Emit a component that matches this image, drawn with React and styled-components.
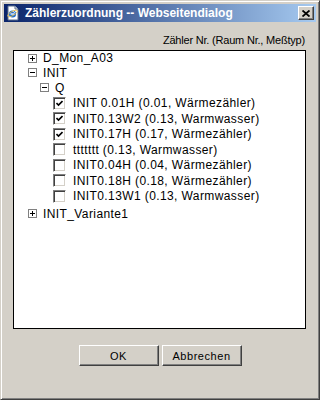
import React from 'react'
import styled, { createGlobalStyle } from 'styled-components'

const GlobalStyle = createGlobalStyle`
    html, body {
        margin: 0;
        padding: 0;
        background: #d4d0c8;
    }
    body {
        font-family: "Liberation Sans", Arial, sans-serif;
    }
`;

const Window = styled.div`
    width: 320px;
    height: 400px;
    box-sizing: border-box;
    display: flex;
    flex-direction: column;
    background: #d4d0c8;
    border-left: 1px solid #d4d0c8;
    border-top: 1px solid #d4d0c8;
    border-right: 1px solid #404040;
    border-bottom: 1px solid #404040;
    box-shadow: inset 1px 1px 0 #ffffff, inset -1px -1px 0 #808080;
    padding: 3px;
`;

const TitleBar = styled.div`
    height: 18px;
    display: flex;
    align-items: center;
    padding: 0 2px 0 1px;
    background: linear-gradient(to right, #0a246a, #a6caf0);
`;

const Title = styled.span`
    flex: 1;
    margin-left: 4px;
    color: #fff;
    font-weight: bold;
    font-size: 12px;
    line-height: 18px;
    white-space: nowrap;
`;

const CloseButton = styled.div`
    width: 16px;
    height: 14px;
    box-sizing: border-box;
    display: flex;
    align-items: center;
    justify-content: center;
    background: #d4d0c8;
    border-top: 1px solid #fff;
    border-left: 1px solid #fff;
    border-right: 1px solid #404040;
    border-bottom: 1px solid #404040;
    box-shadow: inset -1px -1px 0 #808080;
`;

const Body = styled.div`
    flex: 1;
    display: flex;
    flex-direction: column;
    padding: 11px 10px 0 9px;
`;

const Caption = styled.div`
    height: 14px;
    line-height: 14px;
    text-align: right;
    padding-right: 1px;
    font-size: 11px;
    letter-spacing: -0.2px;
    color: #000;
`;

const TreeBox = styled.div`
    margin-top: 3px;
    height: 279px;
    box-sizing: border-box;
    border: 1px solid #000;
    background: #fff;
    padding-top: 0;
`;

const Row = styled.div`
    height: ${p => p.h}px;
    display: flex;
    align-items: center;
    padding-left: ${p => p.indent}px;
    font-size: 12px;
    letter-spacing: 0.4px;
    color: #000;
    white-space: nowrap;
`;

const Expander = styled.span`
    width: 9px;
    height: 9px;
    box-sizing: border-box;
    border: 1px solid #808080;
    background: #fff;
    display: flex;
    align-items: center;
    justify-content: center;
    margin-right: 6px;
`;

const Check = styled.span`
    width: 13px;
    height: 13px;
    box-sizing: border-box;
    border-top: 1px solid #808080;
    border-left: 1px solid #808080;
    border-right: 1px solid #fff;
    border-bottom: 1px solid #fff;
    box-shadow: inset 1px 1px 0 #404040, inset -1px -1px 0 #d4d0c8;
    background: #fff;
    display: flex;
    align-items: center;
    justify-content: center;
    margin-right: 7px;
`;

const ButtonBar = styled.div`
    margin-top: 16px;
    display: flex;
    justify-content: center;
    gap: 3px;
    padding-left: 1px;
`;

const Button = styled.div`
    width: 80px;
    height: 21px;
    box-sizing: border-box;
    display: flex;
    align-items: center;
    justify-content: center;
    background: #d4d0c8;
    border-top: 1px solid #fff;
    border-left: 1px solid #fff;
    border-right: 1px solid #404040;
    border-bottom: 1px solid #404040;
    box-shadow: inset -1px -1px 0 #808080;
    font-size: 11px;
    letter-spacing: 0.55px;
    color: #000;
`;

const PageIcon = () => (
    <svg width="16" height="16" viewBox="0 0 16 16">
        <path d="M3 1h7l3 3v11H3z" fill="#fff" stroke="#5a6e8c" strokeWidth="1" />
        <path d="M10 1v3h3" fill="#dfe6f0" stroke="#5a6e8c" strokeWidth="1" />
        <circle cx="7.5" cy="9" r="3.6" fill="#1f6fd0" />
        <path d="M5.5 9h4" stroke="#fff" strokeWidth="1.3" />
        <path d="M9.5 8c-0.3-1.3-1-1.8-2-1.8" stroke="#fff" strokeWidth="1" fill="none" />
        <ellipse cx="7.5" cy="8.5" rx="5.5" ry="2" fill="none" stroke="#f0c040" strokeWidth="0.8" transform="rotate(-30 7.5 8.5)" />
    </svg>
);

const CloseGlyph = () => (
    <svg width="8" height="7" viewBox="0 0 8 7">
        <path d="M0.5 0.5L7.5 6.5M7.5 0.5L0.5 6.5" stroke="#000" strokeWidth="1.8" />
    </svg>
);

const Sign = ({open}) => (
    <svg width="7" height="7" viewBox="0 0 7 7">
        <path d="M1 3.5h5" stroke="#000" strokeWidth="1" />
        {!open && <path d="M3.5 1v5" stroke="#000" strokeWidth="1" />}
    </svg>
);

const Tick = () => (
    <svg width="7" height="7" viewBox="0 0 7 7">
        <path d="M0.5 3L2.5 5L6.5 1" stroke="#000" strokeWidth="1.6" fill="none" />
    </svg>
);

const meters = [
    { label: 'INIT 0.01H (0.01, Wärmezähler)', checked: true },
    { label: 'INIT0.13W2 (0.13, Warmwasser)', checked: true },
    { label: 'INIT0.17H (0.17, Wärmezähler)', checked: true },
    { label: 'ttttttt (0.13, Warmwasser)', checked: false },
    { label: 'INIT0.04H (0.04, Wärmezähler)', checked: false },
    { label: 'INIT0.18H (0.18, Wärmezähler)', checked: false },
    { label: 'INIT0.13W1 (0.13, Warmwasser)', checked: false },
];

const App = () => {
    return (
        <>
            <GlobalStyle />
            <Window>
                <TitleBar>
                    <PageIcon />
                    <Title>Zählerzuordnung -- Webseitendialog</Title>
                    <CloseButton><CloseGlyph /></CloseButton>
                </TitleBar>
                <Body>
                    <Caption>Zähler Nr. (Raum Nr., Meßtyp)</Caption>
                    <TreeBox>
                        <Row h={14} indent={14}><Expander><Sign /></Expander>D_Mon_A03</Row>
                        <Row h={15} indent={14}><Expander><Sign open /></Expander>INIT</Row>
                        <Row h={15} indent={26}><Expander><Sign open /></Expander>Q</Row>
                        {meters.map((m, i) => (
                            <Row key={m.label} h={i % 2 === 0 ? 16 : 15} indent={39}>
                                <Check>{m.checked && <Tick />}</Check>
                                {m.label}
                            </Row>
                        ))}
                        <Row h={19} indent={14}><Expander><Sign /></Expander>INIT_Variante1</Row>
                    </TreeBox>
                    <ButtonBar>
                        <Button>OK</Button>
                        <Button>Abbrechen</Button>
                    </ButtonBar>
                </Body>
            </Window>
        </>
    );
}

export default App;
